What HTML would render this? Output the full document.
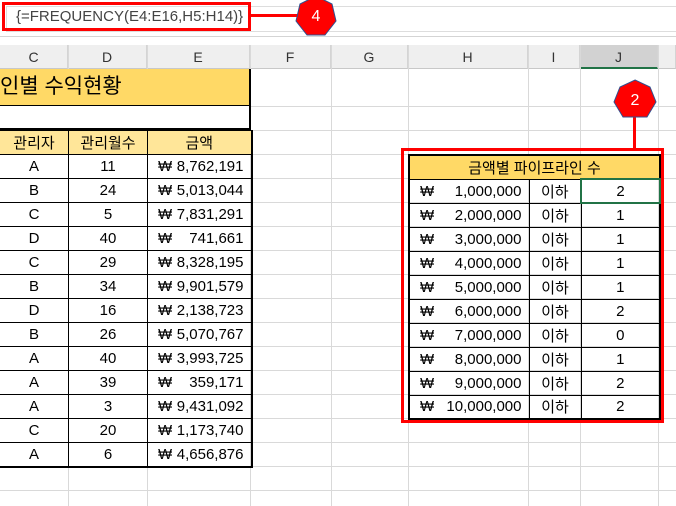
<!DOCTYPE html><html><head><meta charset="utf-8"><style>
*{margin:0;padding:0;box-sizing:border-box}
body{width:676px;height:506px;overflow:hidden;background:#fff;position:relative;font-family:"Liberation Sans","Noto Sans CJK KR",sans-serif;font-size:15px;color:#000}
.a{position:absolute}
.hl{position:absolute;left:0;width:676px;height:1px;background:#d9d9d9}
.vl{position:absolute;top:45px;height:461px;width:1px;background:#d9d9d9}
.ch{position:absolute;top:45px;height:24px;background:#efefef;text-align:center;line-height:24px;font-size:14px;color:#333;border-right:1px solid #d4d4d4;border-bottom:1px solid #c8c8c8}
table{border-collapse:collapse;position:absolute;table-layout:fixed}
td{border:1px solid #000;height:24px;padding:0 4px;text-align:center;white-space:nowrap;font-size:15px}
td.m{padding:0 7px 0 10px}
.w{display:flex;justify-content:space-between}
</style></head><body>
<div class="a" style="left:0;top:0;width:676px;height:37px;border-bottom:1px solid #d4d4d4"></div>
<div class="a" style="left:6px;top:6px;width:670px;height:26px;border:1px solid #ddd;border-right:none"></div>
<div class="a" style="left:16px;top:8px;font-size:15px;color:#444">{=FREQUENCY(E4:E16,H5:H14)}</div>
<div class="a" style="left:2px;top:2px;width:249px;height:29px;border:3px solid #f00"></div>
<div class="a" style="left:251px;top:14px;width:50px;height:3px;background:#f00"></div>
<svg class="a" style="left:294px;top:-6px" width="44" height="44" viewBox="0 0 44 44"><polygon points="22,2 38,10 42,27 31,41 13,41 2,27 6,10" fill="#f00" stroke="#2f4f8f" stroke-width="1"/><text x="22" y="27" fill="#fff" font-size="16" text-anchor="middle" font-family="Liberation Sans">4</text></svg>
<div class="a" style="left:0;top:37px;width:676px;height:8px;background:#fff"></div>
<div class="ch" style="left:0;width:68px">C</div>
<div class="ch" style="left:68px;width:79px">D</div>
<div class="ch" style="left:147px;width:103px">E</div>
<div class="ch" style="left:250px;width:81px">F</div>
<div class="ch" style="left:331px;width:77px">G</div>
<div class="ch" style="left:408px;width:120px">H</div>
<div class="ch" style="left:528px;width:52px">I</div>
<div class="ch" style="left:580px;width:78px;background:#d2d2d2;border-bottom:2px solid #217346">J</div>
<div class="ch" style="left:658px;width:18px"></div>
<div class="hl" style="top:106px"></div><div class="hl" style="top:130px"></div><div class="hl" style="top:154px"></div><div class="hl" style="top:178px"></div><div class="hl" style="top:202px"></div><div class="hl" style="top:226px"></div><div class="hl" style="top:250px"></div><div class="hl" style="top:274px"></div><div class="hl" style="top:298px"></div><div class="hl" style="top:322px"></div><div class="hl" style="top:346px"></div><div class="hl" style="top:370px"></div><div class="hl" style="top:394px"></div><div class="hl" style="top:418px"></div><div class="hl" style="top:442px"></div><div class="hl" style="top:466px"></div><div class="hl" style="top:490px"></div>
<div class="vl" style="left:68px"></div><div class="vl" style="left:147px"></div><div class="vl" style="left:250px"></div><div class="vl" style="left:331px"></div><div class="vl" style="left:408px"></div><div class="vl" style="left:528px"></div><div class="vl" style="left:580px"></div><div class="vl" style="left:658px"></div>
<div class="a" style="left:0;top:69px;width:251px;height:37px;background:#ffd966;border-right:2px solid #000;border-bottom:1px solid #000;font-size:21px;line-height:35px;white-space:nowrap;overflow:hidden">인별 수익현황</div>
<div class="a" style="left:0;top:106px;width:251px;height:24px;background:#fff;border-right:2px solid #000;border-bottom:2px solid #000"></div>
<table style="left:-1px;top:130px;width:252px;border-right:2px solid #000;border-bottom:2px solid #000">
<col style="width:69px"><col style="width:79px"><col style="width:104px">
<tr style="background:#ffe699"><td>관리자</td><td>관리월수</td><td>금액</td></tr>
<tr><td>A</td><td>11</td><td class="m"><div class="w"><span>₩</span><span>8,762,191</span></div></td></tr>
<tr><td>B</td><td>24</td><td class="m"><div class="w"><span>₩</span><span>5,013,044</span></div></td></tr>
<tr><td>C</td><td>5</td><td class="m"><div class="w"><span>₩</span><span>7,831,291</span></div></td></tr>
<tr><td>D</td><td>40</td><td class="m"><div class="w"><span>₩</span><span>741,661</span></div></td></tr>
<tr><td>C</td><td>29</td><td class="m"><div class="w"><span>₩</span><span>8,328,195</span></div></td></tr>
<tr><td>B</td><td>34</td><td class="m"><div class="w"><span>₩</span><span>9,901,579</span></div></td></tr>
<tr><td>D</td><td>16</td><td class="m"><div class="w"><span>₩</span><span>2,138,723</span></div></td></tr>
<tr><td>B</td><td>26</td><td class="m"><div class="w"><span>₩</span><span>5,070,767</span></div></td></tr>
<tr><td>A</td><td>40</td><td class="m"><div class="w"><span>₩</span><span>3,993,725</span></div></td></tr>
<tr><td>A</td><td>39</td><td class="m"><div class="w"><span>₩</span><span>359,171</span></div></td></tr>
<tr><td>A</td><td>3</td><td class="m"><div class="w"><span>₩</span><span>9,431,092</span></div></td></tr>
<tr><td>C</td><td>20</td><td class="m"><div class="w"><span>₩</span><span>1,173,740</span></div></td></tr>
<tr><td>A</td><td>6</td><td class="m"><div class="w"><span>₩</span><span>4,656,876</span></div></td></tr>
</table>
<table style="left:408px;top:154px;width:251px;border:2px solid #000">
<col style="width:120px"><col style="width:52px"><col style="width:79px">
<tr style="background:#ffd966"><td colspan="3">금액별 파이프라인 수</td></tr>
<tr><td class="m"><div class="w"><span>₩</span><span>1,000,000</span></div></td><td>이하</td><td style="border:2px solid #217346">2</td></tr>
<tr><td class="m"><div class="w"><span>₩</span><span>2,000,000</span></div></td><td>이하</td><td>1</td></tr>
<tr><td class="m"><div class="w"><span>₩</span><span>3,000,000</span></div></td><td>이하</td><td>1</td></tr>
<tr><td class="m"><div class="w"><span>₩</span><span>4,000,000</span></div></td><td>이하</td><td>1</td></tr>
<tr><td class="m"><div class="w"><span>₩</span><span>5,000,000</span></div></td><td>이하</td><td>1</td></tr>
<tr><td class="m"><div class="w"><span>₩</span><span>6,000,000</span></div></td><td>이하</td><td>2</td></tr>
<tr><td class="m"><div class="w"><span>₩</span><span>7,000,000</span></div></td><td>이하</td><td>0</td></tr>
<tr><td class="m"><div class="w"><span>₩</span><span>8,000,000</span></div></td><td>이하</td><td>1</td></tr>
<tr><td class="m"><div class="w"><span>₩</span><span>9,000,000</span></div></td><td>이하</td><td>2</td></tr>
<tr><td class="m"><div class="w"><span>₩</span><span>10,000,000</span></div></td><td>이하</td><td>2</td></tr>
</table>
<div class="a" style="left:401px;top:148px;width:263px;height:275px;border:3px solid #f00"></div>
<div class="a" style="left:633px;top:115px;width:3px;height:34px;background:#f00"></div>
<svg class="a" style="left:612px;top:79px" width="46" height="40" viewBox="0 0 46 40"><polygon points="23,1 38,8 44,23 35,38 11,38 2,23 8,8" fill="#f00" stroke="#2f4f8f" stroke-width="1"/><text x="23" y="26" fill="#fff" font-size="16" text-anchor="middle" font-family="Liberation Sans">2</text></svg>
</body></html>
